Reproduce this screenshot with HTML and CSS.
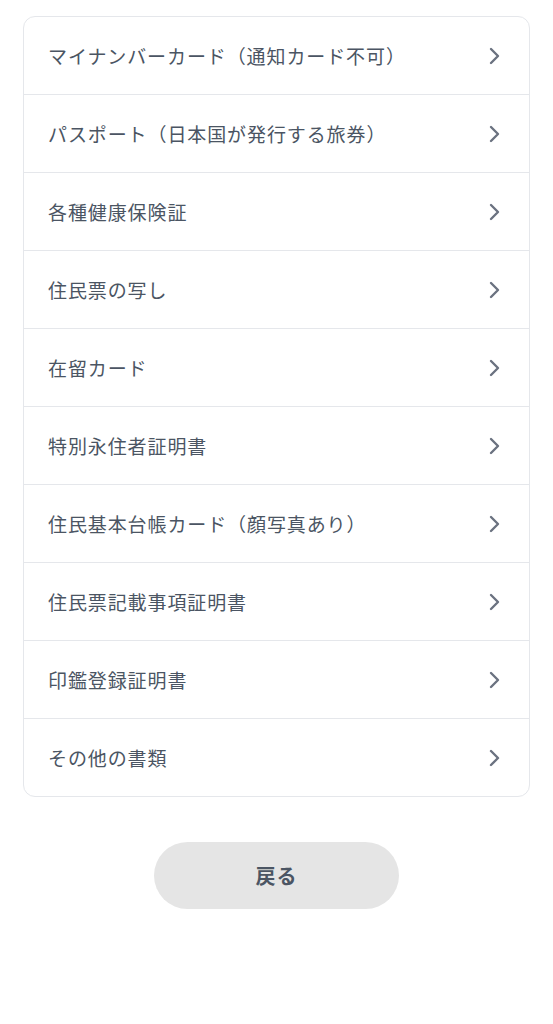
FILE: index.html
```html
<!DOCTYPE html>
<html lang="ja">
<head>
<meta charset="utf-8">
<link rel="stylesheet" href="styles.css">
</head>
<body>
<main class="page">
  <ul class="list">
    <li class="item"><span class="label">マイナンバーカード（通知カード不可）</span><svg class="chev" viewBox="0 0 12 18"><path d="M2 2l7 7-7 7"/></svg></li>
    <li class="item"><span class="label">パスポート（日本国が発行する旅券）</span><svg class="chev" viewBox="0 0 12 18"><path d="M2 2l7 7-7 7"/></svg></li>
    <li class="item"><span class="label">各種健康保険証</span><svg class="chev" viewBox="0 0 12 18"><path d="M2 2l7 7-7 7"/></svg></li>
    <li class="item"><span class="label">住民票の写し</span><svg class="chev" viewBox="0 0 12 18"><path d="M2 2l7 7-7 7"/></svg></li>
    <li class="item"><span class="label">在留カード</span><svg class="chev" viewBox="0 0 12 18"><path d="M2 2l7 7-7 7"/></svg></li>
    <li class="item"><span class="label">特別永住者証明書</span><svg class="chev" viewBox="0 0 12 18"><path d="M2 2l7 7-7 7"/></svg></li>
    <li class="item"><span class="label">住民基本台帳カード（顔写真あり）</span><svg class="chev" viewBox="0 0 12 18"><path d="M2 2l7 7-7 7"/></svg></li>
    <li class="item"><span class="label">住民票記載事項証明書</span><svg class="chev" viewBox="0 0 12 18"><path d="M2 2l7 7-7 7"/></svg></li>
    <li class="item"><span class="label">印鑑登録証明書</span><svg class="chev" viewBox="0 0 12 18"><path d="M2 2l7 7-7 7"/></svg></li>
    <li class="item"><span class="label">その他の書類</span><svg class="chev" viewBox="0 0 12 18"><path d="M2 2l7 7-7 7"/></svg></li>
  </ul>
  <div class="actions">
    <button class="back" type="button">戻る</button>
  </div>
</main>
</body>
</html>
```

FILE: styles.css
```css
* { box-sizing: border-box; }
html, body { margin: 0; padding: 0; background: #fff; }
body {
  font-family: "Noto Sans CJK JP", "Noto Sans", sans-serif;
  color: #4b5563;
}
.page {
  padding: 16px 23px 0;
}
.list {
  list-style: none;
  margin: 0;
  padding: 0;
  border: 1px solid #e5e7eb;
  border-radius: 12px;
  overflow: hidden;
}
.item {
  display: flex;
  align-items: center;
  justify-content: space-between;
  height: 78px;
  padding: 0 28px 0 24px;
  border-top: 1px solid #e5e7eb;
}
.item:first-child {
  height: 77px;
  border-top: none;
}
.label {
  font-size: 19px;
  letter-spacing: 0.9px;
  line-height: 1;
  color: #4b5563;
}
.chev {
  width: 12px;
  height: 18px;
  fill: none;
  stroke: #6b7280;
  stroke-width: 2.4;
  stroke-linecap: round;
  stroke-linejoin: round;
}
.actions {
  display: flex;
  justify-content: center;
  padding-top: 45px;
}
.back {
  width: 245px;
  height: 67px;
  border: none;
  border-radius: 34px;
  background: #e5e5e5;
  color: #4b5563;
  font-family: "Noto Sans CJK JP", "Noto Sans", sans-serif;
  font-size: 20px;
  font-weight: 700;
  letter-spacing: 1px;
}
```
